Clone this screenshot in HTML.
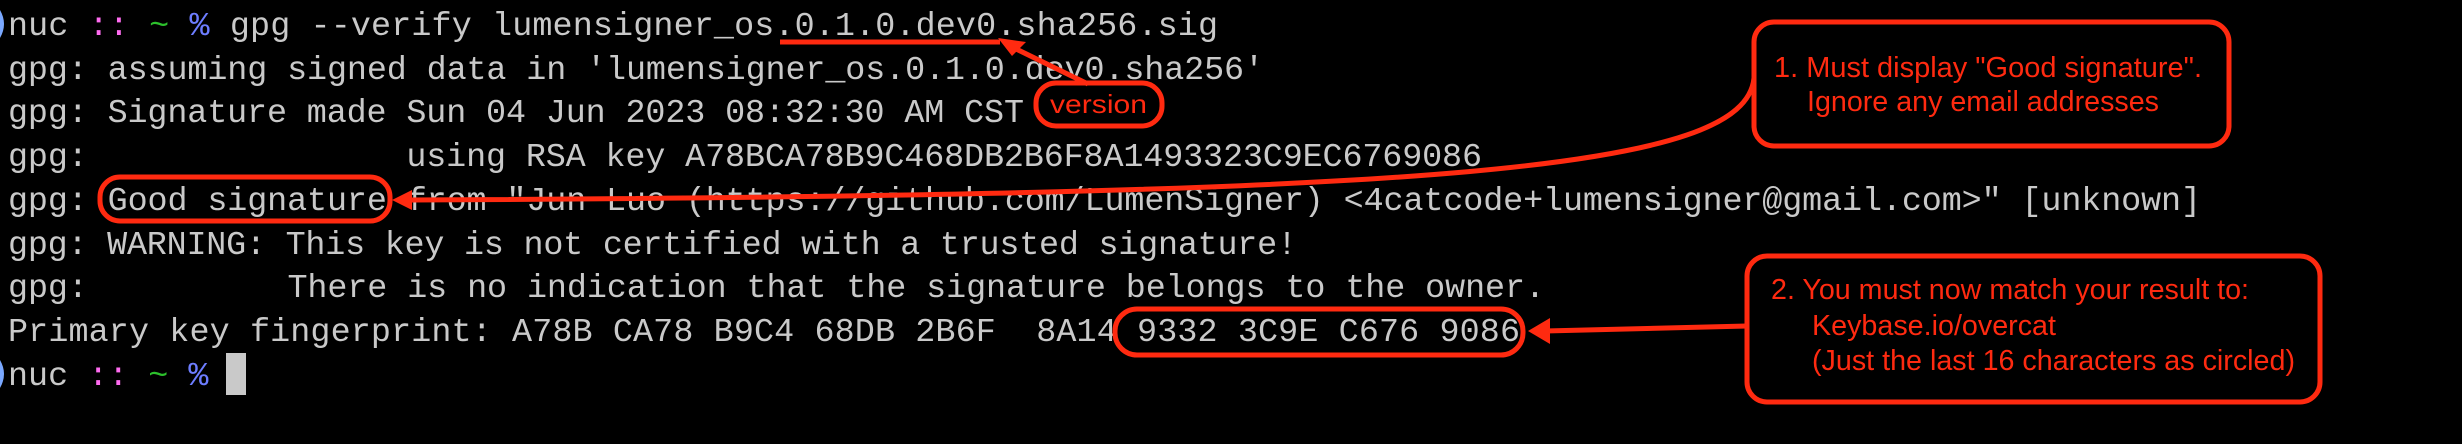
<!DOCTYPE html>
<html><head><meta charset="utf-8"><style>
html,body{margin:0;padding:0;background:#000;width:2462px;height:444px;overflow:hidden}
svg{display:block}
.t{font-family:"Liberation Mono",monospace;font-size:33.4px;fill:#c9c9c9}
.a{font-family:"Liberation Sans Narrow","Liberation Sans",sans-serif;font-size:29px;fill:#ff2a10}
</style></head><body>
<svg width="2462" height="444" viewBox="0 0 2462 444" xmlns="http://www.w3.org/2000/svg">
<rect width="2462" height="444" fill="#000"/>
<path d="M0 10 Q8 24 0 38" fill="#7aa8ff"/>
<path d="M0 360 Q8 374 0 388" fill="#7aa8ff"/>
<g class="t">
<text x="8" y="35" textLength="1210" lengthAdjust="spacing"><tspan>nuc&#160;</tspan><tspan fill="#ff6cf0">::</tspan><tspan>&#160;</tspan><tspan fill="#2cc02c">~</tspan><tspan>&#160;</tspan><tspan fill="#6d7dff">%</tspan><tspan>&#160;gpg&#160;--verify&#160;lumensigner_os.0.1.0.dev0.sha256.sig</tspan></text>
<text x="8" y="79" textLength="1256" lengthAdjust="spacing">gpg:&#160;assuming&#160;signed&#160;data&#160;in&#160;'lumensigner_os.0.1.0.dev0.sha256'</text>
<text x="8" y="122" textLength="1016" lengthAdjust="spacing">gpg:&#160;Signature&#160;made&#160;Sun&#160;04&#160;Jun&#160;2023&#160;08:32:30&#160;AM&#160;CST</text>
<text x="8" y="166" textLength="1474" lengthAdjust="spacing">gpg:&#160;&#160;&#160;&#160;&#160;&#160;&#160;&#160;&#160;&#160;&#160;&#160;&#160;&#160;&#160;&#160;using&#160;RSA&#160;key&#160;A78BCA78B9C468DB2B6F8A1493323C9EC6769086</text>
<text x="8" y="210" textLength="2193" lengthAdjust="spacing">gpg:&#160;Good&#160;signature&#160;from&#160;"Jun&#160;Luo&#160;(https://github.com/LumenSigner)&#160;&lt;4catcode+lumensigner@gmail.com&gt;"&#160;[unknown]</text>
<text x="8" y="254" textLength="1289" lengthAdjust="spacing">gpg:&#160;WARNING:&#160;This&#160;key&#160;is&#160;not&#160;certified&#160;with&#160;a&#160;trusted&#160;signature!</text>
<text x="8" y="297" textLength="1537" lengthAdjust="spacing">gpg:&#160;&#160;&#160;&#160;&#160;&#160;&#160;&#160;&#160;&#160;There&#160;is&#160;no&#160;indication&#160;that&#160;the&#160;signature&#160;belongs&#160;to&#160;the&#160;owner.</text>
<text x="8" y="341" textLength="1512" lengthAdjust="spacing">Primary&#160;key&#160;fingerprint:&#160;A78B&#160;CA78&#160;B9C4&#160;68DB&#160;2B6F&#160;&#160;8A14&#160;9332&#160;3C9E&#160;C676&#160;9086</text>
<text x="8" y="385"><tspan>nuc&#160;</tspan><tspan fill="#ff6cf0">::</tspan><tspan>&#160;</tspan><tspan fill="#2cc02c">~</tspan><tspan>&#160;</tspan><tspan fill="#6d7dff">%</tspan></text>
</g>
<rect x="226" y="353" width="20" height="42" fill="#c9c9c9"/>
<g stroke="#ff2a10" fill="none" stroke-width="5">
<line x1="780" y1="42" x2="1000" y2="42"/>
<line x1="1088" y1="84" x2="1010" y2="46"/>
<rect x="1036" y="83" width="126" height="43" rx="20"/>
<rect x="100" y="177" width="290" height="44" rx="20"/>
<rect x="1115" y="309" width="408" height="46" rx="22"/>
<rect x="1754" y="22" width="475" height="124" rx="20"/>
<rect x="1747" y="256" width="573" height="146" rx="20"/>
<path d="M1754 78 C1745 170 1450 195 410 200"/>
<line x1="1747" y1="326" x2="1545" y2="331"/>
</g>
<g fill="#ff2a10">
<polygon points="998,38 1026,42 1012,56"/>
<polygon points="392,200 412,190 412,210"/>
<polygon points="1528,331 1550,318 1550,344"/>
</g>
<text class="a" x="1050" y="113" textLength="97" lengthAdjust="spacingAndGlyphs" style="font-size:26px">version</text>
<text class="a" x="1774" y="77" textLength="428" lengthAdjust="spacingAndGlyphs">1. Must display "Good signature".</text>
<text class="a" x="1807" y="111" textLength="352" lengthAdjust="spacingAndGlyphs">Ignore any email addresses</text>
<text class="a" x="1771" y="299" textLength="478" lengthAdjust="spacingAndGlyphs">2. You must now match your result to:</text>
<text class="a" x="1812" y="335" textLength="244" lengthAdjust="spacingAndGlyphs">Keybase.io/overcat</text>
<text class="a" x="1812" y="370" textLength="483" lengthAdjust="spacingAndGlyphs">(Just the last 16 characters as circled)</text>
</svg>
</body></html>
